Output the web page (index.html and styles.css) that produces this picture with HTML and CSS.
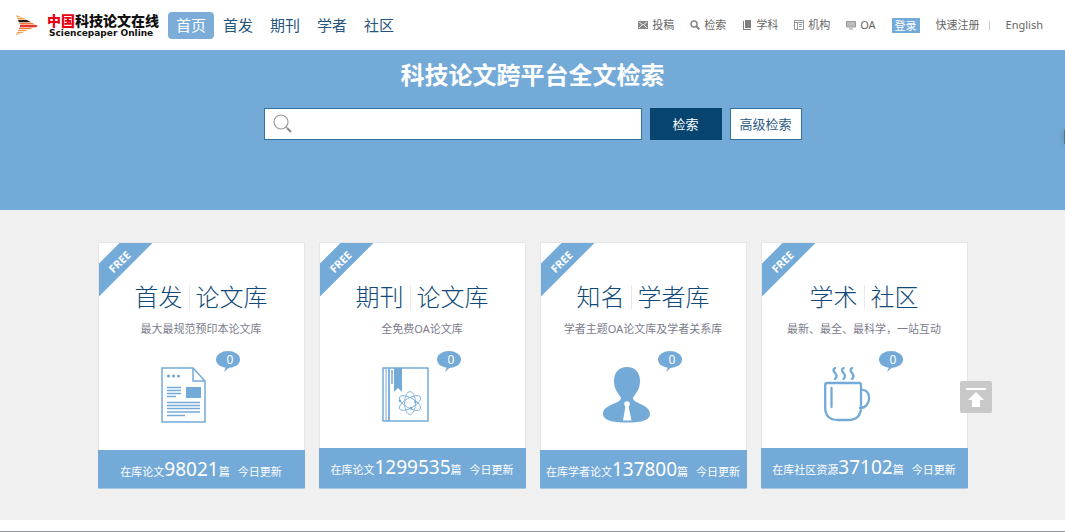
FILE: index.html
```html
<!DOCTYPE html>
<html lang="zh-CN">
<head>
<meta charset="utf-8">
<meta name="viewport" content="width=device-width, initial-scale=1">
<title>中国科技论文在线</title>
<link rel="stylesheet" href="styles.css">
</head>
<body>
<header class="topbar">
  <a class="logo" href="#">
    <svg class="logo-mark" viewBox="0 0 24 20" aria-hidden="true">
      <path d="M1 0l5 2.200H2zM2 2.800h6l4 1.700H3z" fill="#f3a24a"/>
      <path d="M3 5h9l4 2.200H4z" fill="#2b1a14"/>
      <path d="M4 7.800h13l3 1.700H5z" fill="#ee7a35"/>
      <path d="M5 10h16l2 1-2 1.200H5z" fill="#e8322a"/>
      <path d="M4 12.800h14l-3 1.500H4z" fill="#ee7a35"/>
      <path d="M3 15h10l-3 1.300H3zM2 17h7l-3 1.200H2zM1 18.800h4L1 20z" fill="#f3a24a"/>
    </svg>
    <span class="logo-text">
      <span class="logo-cn"><em>中国</em>科技论文在线</span>
      <span class="logo-en">Sciencepaper Online</span>
    </span>
  </a>
  <nav class="main-nav">
    <a class="active" href="#">首页</a>
    <a href="#">首发</a>
    <a href="#">期刊</a>
    <a href="#">学者</a>
    <a href="#">社区</a>
  </nav>
  <nav class="tool-nav">
    <a href="#"><svg viewBox="0 0 10 10"><path d="M0 1h10v8H0z" fill="#888"/><path d="M1 2l4 3 4-3M1 8l3-3M9 8L6 5" fill="none" stroke="#fff" stroke-width=".8"/></svg>投稿</a>
    <a href="#"><svg viewBox="0 0 10 10"><circle cx="4" cy="4" r="3" fill="none" stroke="#888" stroke-width="1.5"/><path d="M6.200 6.200L9.300 9.300" stroke="#888" stroke-width="2"/></svg>检索</a>
    <a href="#"><svg viewBox="0 0 10 10"><path d="M3 0h6v8H3zM1 1h1v8h7v1H1z" fill="#808080"/></svg>学科</a>
    <a href="#"><svg viewBox="0 0 10 10"><path d="M.5.500h9v9h-9zM.5 2.500h9M3.500 2.500v7M5 4.500h3M5 6.500h3" fill="none" stroke="#999"/></svg>机构</a>
    <a href="#"><svg viewBox="0 0 10 10"><path d="M.5 1.500h9v5.500h-9z" fill="#bbb" stroke="#999"/><path d="M3 9h4" stroke="#999"/></svg>OA</a>
    <a class="login" href="#">登录</a>
    <a class="register" href="#">快速注册</a>
    <a href="#">English</a>
  </nav>
</header>

<main>
  <section class="hero">
    <h1>科技论文跨平台全文检索</h1>
    <form class="search">
      <label class="search-box">
        <svg viewBox="0 0 20 20" aria-hidden="true"><circle cx="8" cy="8" r="7" fill="none" stroke="#999" stroke-width="1.2"/><path d="M12.500 12.500l1.500 1.500" stroke="#999"/><path d="M14 14l4 4" stroke="#888" stroke-width="2"/></svg>
        <input type="text" aria-label="检索">
      </label>
      <button class="btn btn-primary" type="submit">检索</button>
      <button class="btn" type="button">高级检索</button>
    </form>
  </section>

  <section class="libraries">
    <article class="card">
      <div class="ribbon"><span>FREE</span></div>
      <h2><span>首发</span><span>论文库</span></h2>
      <p>最大最规范预印本论文库</p>
      <div class="figure">
        <svg class="icon" viewBox="0 0 48 56" fill="none" stroke="#74aad7">
          <path d="M1 1h31l12 13v41H1zM32 1v13h12" stroke-width="1.500"/>
          <path d="M6 20.500h14M6 23.500h14M6 26.500h14M6 29.500h9M6 35.500h33M6 38.500h33M6 41.500h33M6 45h33M6 48.500h18" stroke-width="1.300"/>
          <path d="M25 20h15v11H25z" fill="#74aad7" stroke="none"/>
          <g fill="#74aad7" stroke="none"><circle cx="7.500" cy="9" r="1.600"/><circle cx="12.500" cy="9" r="1.600"/><circle cx="17.500" cy="9" r="1.600"/></g>
        </svg>
        <span class="bubble">0</span>
      </div>
      <a class="stat" href="#"><span>在库论文<b>98021</b>篇</span><span>今日更新</span></a>
    </article>

    <article class="card">
      <div class="ribbon"><span>FREE</span></div>
      <h2><span>期刊</span><span>论文库</span></h2>
      <p>全免费OA论文库</p>
      <div class="figure">
        <svg class="icon" viewBox="0 0 48 56" fill="none" stroke="#74aad7">
          <path d="M1 1h45v53H1z" stroke-width="1.500"/>
          <path d="M4 1v53" stroke-width="1"/><path d="M7 1v53" stroke-width="1.800"/><path d="M10 3v14" stroke-width="1.500"/>
          <path d="M12 1h8v24l-4-4-4 4z" fill="#74aad7" stroke="none"/>
          <g stroke-width=".8"><ellipse cx="28" cy="36" rx="5.500" ry="11.500"/><ellipse cx="28" cy="36" rx="5" ry="12" transform="rotate(60 28 36)"/><ellipse cx="28" cy="36" rx="5" ry="12" transform="rotate(-60 28 36)"/></g>
          <g fill="#74aad7" stroke="none"><circle cx="18" cy="34" r="1.300"/><circle cx="33.500" cy="35" r="1.300"/><circle cx="29" cy="41" r="1.300"/></g>
        </svg>
        <span class="bubble">0</span>
      </div>
      <a class="stat stat-tall" href="#"><span>在库论文<b>1299535</b>篇</span><span>今日更新</span></a>
    </article>

    <article class="card">
      <div class="ribbon"><span>FREE</span></div>
      <h2><span>知名</span><span>学者库</span></h2>
      <p>学者主题OA论文库及学者关系库</p>
      <div class="figure">
        <svg class="icon" viewBox="0 0 48 56">
          <path d="M24 0C15.500 0 11 6 11 14c0 9 4.500 12 7 17C18 37 0 37 0 47c0 6 8 8.500 24 8.500S47 53 47 47c0-10-17-10-17-16C32.500 26 37 23 37 14 37 6 32.500 0 24 0z" fill="#74aad7"/>
          <circle cx="24" cy="37" r="2.800" fill="#fff"/><path d="M22.500 39h3l3 14.500H20z" fill="#fff"/>
        </svg>
        <span class="bubble">0</span>
      </div>
      <a class="stat" href="#"><span>在库学者论文<b>137800</b>篇</span><span>今日更新</span></a>
    </article>

    <article class="card">
      <div class="ribbon"><span>FREE</span></div>
      <h2><span>学术</span><span>社区</span></h2>
      <p>最新、最全、最科学，一站互动</p>
      <div class="figure">
        <svg class="icon" viewBox="0 0 48 56" fill="none" stroke="#74aad7" stroke-width="2.300" stroke-linecap="round">
          <path d="M3 16h32q2 0 2 2v22q0 13-13 13H14Q1 53 1.200 40V18q0-2 2-2zM37 23c11-2 11 18-1 18M7.500 21v19"/>
          <path d="M11 1q-3 2 0 5t0 6M19.500 1q-3 2 0 5t0 6M28 1q-3 2 0 5t0 6" />
        </svg>
        <span class="bubble">0</span>
      </div>
      <a class="stat stat-tall" href="#"><span>在库社区资源<b>37102</b>篇</span><span>今日更新</span></a>
    </article>
  </section>
</main>

<footer class="footer-edge"></footer>
<div class="side-handle"></div>
<button class="to-top" type="button" aria-label="返回顶部">
  <svg viewBox="0 0 32 32"><path d="M6 7h20v2H6zM16 11l8 8h-4v7h-8v-7H8z" fill="#fff"/></svg>
</button>
</body>
</html>
```
FILE: styles.css
```css
* { box-sizing: border-box; }

body {
  margin: 0;
  background: #fff;
  color: #666;
  font: 11px/16px "Noto Sans", "Noto Sans CJK SC", sans-serif;
}

a { color: inherit; text-decoration: none; }

.topbar {
  display: flex;
  align-items: center;
  height: 50px;
  padding: 0 22px 0 15px;
}

.logo { display: flex; align-items: center; gap: 8px; }
.logo-mark { width: 24px; height: 20px; }
.logo-text { display: flex; flex-direction: column; width: 112px; color: #111; }
.logo-cn { font-size: 14px; line-height: 16px; font-weight: 900; white-space: nowrap; }
.logo-cn em { color: #e60012; font-style: normal; }
.logo-en { padding-left: 2px; font: bold 9px/9px "DejaVu Sans", sans-serif; white-space: nowrap; }

.main-nav { display: flex; gap: 1px; margin-left: 9px; }
.main-nav a {
  padding: 0 8px;
  border-radius: 4px;
  color: #27557c;
  font-size: 15px;
  line-height: 27px;
}
.main-nav .active { background: #7badd8; color: #fff; }

.tool-nav { display: flex; align-items: center; gap: 16px; margin-left: auto; white-space: nowrap; }
.tool-nav a { display: flex; align-items: center; gap: 4px; }
.tool-nav svg { width: 10px; height: 10px; }
.tool-nav .login { padding: 0 3px; background: #74aad7; color: #fff; line-height: 15px; }
.tool-nav .register::after { content: ""; width: 1px; height: 9px; margin-left: 5px; background: #ccc; }

.hero { min-height: 160px; padding: 10px 0 0; background: #74aad7; }
.hero h1 { margin: 0; color: #fff; font-size: 24px; line-height: 30px; font-weight: 700; text-align: center; }

.search { display: flex; justify-content: center; gap: 8px; margin-top: 18px; }
.search-box {
  display: flex;
  align-items: center;
  width: 378px;
  height: 32px;
  padding: 0 8px;
  border: 1px solid #336f9f;
  background: #fff;
}
.search-box svg { width: 20px; height: 20px; }
.search-box input { flex: 1; min-width: 0; border: 0; outline: 0; background: none; font: inherit; font-size: 14px; }
.btn {
  width: 72px;
  height: 32px;
  padding: 0;
  border: 1px solid #336f9f;
  background: #fff;
  color: #2b5a82;
  font: inherit;
  font-size: 13px;
}
.btn-primary { border-color: #074570; background: #074570; color: #fff; }

.libraries {
  display: grid;
  grid-template-columns: repeat(auto-fit, 207px);
  justify-content: center;
  gap: 14px;
  padding: 32px 96px 31px;
  background: #f0f0f0;
}

.card {
  position: relative;
  display: flex;
  flex-direction: column;
  align-items: center;
  min-height: 247px;
  border: 1px solid #e6e6e6;
  border-bottom-color: #a5c8e4;
  background: #fff;
}
.ribbon {
  position: absolute;
  top: 0;
  left: 0;
  display: grid;
  place-items: center;
  width: 54px;
  height: 54px;
  padding: 0 12px 16px 0;
  background: #74aad7;
  clip-path: polygon(21px 0, 54px 0, 0 54px, 0 21px);
  color: #fff;
  font-weight: 700;
}
.ribbon span { transform: rotate(-45deg); }

.card h2 {
  display: flex;
  align-items: center;
  margin: 38px 0 0;
  color: #114a78;
  font-size: 24px;
  line-height: 32px;
  font-weight: 300;
}
.card h2 span + span { margin-left: 6px; padding-left: 6px; border-left: 1px solid #e8e8e8; line-height: 24px; }
.card p { margin: 8px 0 0; color: #7c7c8c; }

.figure { position: relative; width: 80px; height: 73px; margin: 14px 0 0; padding: 16px 0 0; }
.icon { display: block; width: 48px; height: 56px; }
.bubble {
  position: absolute;
  top: 0;
  right: 1px;
  width: 24px;
  height: 17px;
  padding-left: 4px;
  border-radius: 50%;
  background: #74aad7;
  color: #fff;
  font-size: 12px;
  line-height: 17px;
  text-align: center;
}
.bubble::after {
  content: "";
  position: absolute;
  top: 14px;
  left: 7px;
  width: 9px;
  height: 7px;
  background: #74aad7;
  clip-path: polygon(10% 0, 100% 0, 10% 100%, 30% 40%);
}

.stat {
  display: flex;
  justify-content: center;
  align-items: baseline;
  align-self: stretch;
  gap: 8px;
  height: 38px;
  margin: auto -1px 0;
  padding-top: 5px;
  background: #74aad7;
  color: #fff;
  line-height: 28px;
  white-space: nowrap;
}
.stat-tall { height: 40px; }
.stat b { font-size: 19px; font-weight: 400; }

.footer-edge {
  height: 12px;
  border-bottom: 1px solid #8c9297;
}

.side-handle {
  position: fixed;
  top: 130px;
  right: 0;
  width: 1px;
  height: 14px;
  background: #4f7391;
  box-shadow: 0 0 5px #41627d;
}

.to-top {
  position: fixed;
  right: 73px;
  bottom: 119px;
  width: 32px;
  height: 32px;
  padding: 0;
  border: 0;
  border-radius: 2px;
  background: #c9c9c9;
}
.to-top svg { display: block; width: 32px; height: 32px; }
```
